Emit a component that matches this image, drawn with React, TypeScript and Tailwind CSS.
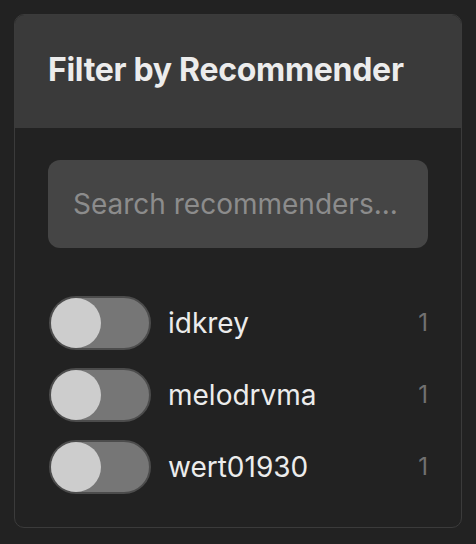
import { useState } from "react";

type Recommender = {
  name: string;
  count: number;
};

const RECOMMENDERS: Recommender[] = [
  { name: "idkrey", count: 1 },
  { name: "melodrvma", count: 1 },
  { name: "wert01930", count: 1 },
];

const Toggle = ({
  checked,
  onChange,
}: {
  checked: boolean;
  onChange: (v: boolean) => void;
}) => (
  <button
    type="button"
    onClick={() => onChange(!checked)}
    className={`flex h-[54px] w-[102px] shrink-0 items-center rounded-full border-2 border-[#4c4c4c] ${
      checked ? "justify-end bg-[#9a9a9a]" : "justify-start bg-[#767676]"
    }`}
  >
    <span className="block h-[50px] w-[50px] rounded-full bg-[#cdcdcd]" />
  </button>
);

const App = () => {
  const [search, setSearch] = useState("");
  const [selected, setSelected] = useState<string[]>([]);

  const list = RECOMMENDERS.filter(({ name }) =>
    name.toLowerCase().includes(search.toLowerCase())
  );

  return (
    <div
      className="min-h-[544px] w-full bg-[#222222] p-[14px]"
      style={{ fontFamily: "Inter, 'Noto Sans', sans-serif" }}
    >
      <div className="w-[448px] overflow-hidden rounded-[10px] border border-[#3b3b3b]">
        <div className="flex h-[113px] items-center bg-[#3a3a3a] px-[33px] pb-[3px]">
          <h2 className="text-[32px] font-bold tracking-[-0.3px] text-[#ececec]">
            Filter by Recommender
          </h2>
        </div>
        <div className="flex flex-col px-[33px] pt-[32px] pb-[33px]">
          <input
            type="text"
            value={search}
            onChange={(e) => setSearch(e.currentTarget.value)}
            placeholder="Search recommenders..."
            className="h-[88px] w-full rounded-[12px] bg-[#454545] px-[25px] text-[28px] text-[#e0e0e0] outline-none placeholder:text-[#8c8c8c]"
          />
          <div className="mt-[48px] flex flex-col gap-[18px]">
            {list.map(({ name, count }) => (
              <div key={name} className="flex items-center pl-[1px]">
                <Toggle
                  checked={selected.includes(name)}
                  onChange={(v) =>
                    setSelected((s) =>
                      v ? [...s, name] : s.filter((n) => n !== name)
                    )
                  }
                />
                <span className="ml-[17px] flex-1 text-[28px] text-[#ececec]">
                  {name}
                </span>
                <span className="text-[24px] text-[#717171]">{count}</span>
              </div>
            ))}
          </div>
        </div>
      </div>
    </div>
  );
};

export default App;
